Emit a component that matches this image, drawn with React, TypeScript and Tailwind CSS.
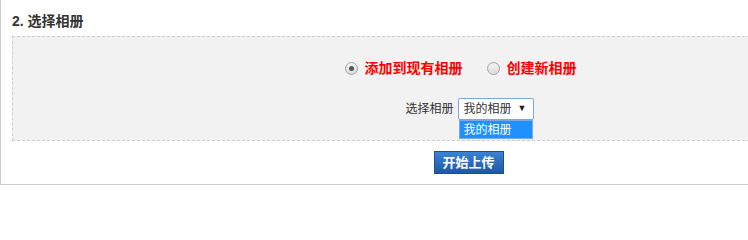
const font = "font-['Liberation_Sans','Noto_Sans_CJK_SC',sans-serif]";

function Radio({ checked }: { checked?: boolean }) {
  return (
    <span className="flex h-[13px] w-[13px] items-center justify-center rounded-full border border-[#a3a3a3] bg-gradient-to-b from-[#f4f4f4] to-[#dcdcdc]">
      {checked && <span className="h-[5px] w-[5px] rounded-full bg-[#555]" />}
    </span>
  );
}

export default function App() {
  return (
    <div className={`${font} h-[208px] w-[748px] overflow-hidden bg-white`}>
      <div className="w-[936px] border-b border-l border-[#cccccc] pb-[10px] pt-[11px]">
        <h2 className="px-[11px] text-[14px] font-bold leading-[20px] text-[#333]">2. 选择相册</h2>

        <div className="mx-[11px] mt-[5px] h-[105px] border border-dashed border-[#cccccc] bg-[#f2f2f2]">
          <div className="flex items-center justify-center gap-[24px] pt-[21px] pr-[16px]">
            <label className="flex items-center gap-[7px] text-[14px] font-bold text-[#ff0000]">
              <Radio checked />
              添加到现有相册
            </label>
            <label className="flex items-center gap-[7px] text-[14px] font-bold text-[#ff0000]">
              <Radio />
              创建新相册
            </label>
          </div>

          <div className="mt-[19px] flex items-center justify-center gap-[4px] pl-[2px]">
            <span className="text-[12px] text-[#333]">选择相册</span>
            <div className="relative">
              <div className="flex h-[22px] w-[76px] items-center justify-between rounded-[2px] border border-[#7aa7e6] bg-white pl-[5px] pr-[6px] text-[12px] text-[#333]">
                <span>我的相册</span>
                <span className="text-[9px] text-[#222]">▼</span>
              </div>
              <div className="absolute left-[1px] top-[22px] flex h-[19px] w-[74px] items-center border border-[#7aa7e6] bg-[#1e90ff] pl-[4px] text-[12px] text-white">
                我的相册
              </div>
            </div>
          </div>
        </div>

        <div className="mt-[10px] flex justify-center">
          <button className="h-[23px] w-[70px] border border-[#1d4f91] bg-gradient-to-b from-[#3b82d4] to-[#1f58a6] text-[13px] font-bold text-white">
            开始上传
          </button>
        </div>
      </div>
    </div>
  );
}
